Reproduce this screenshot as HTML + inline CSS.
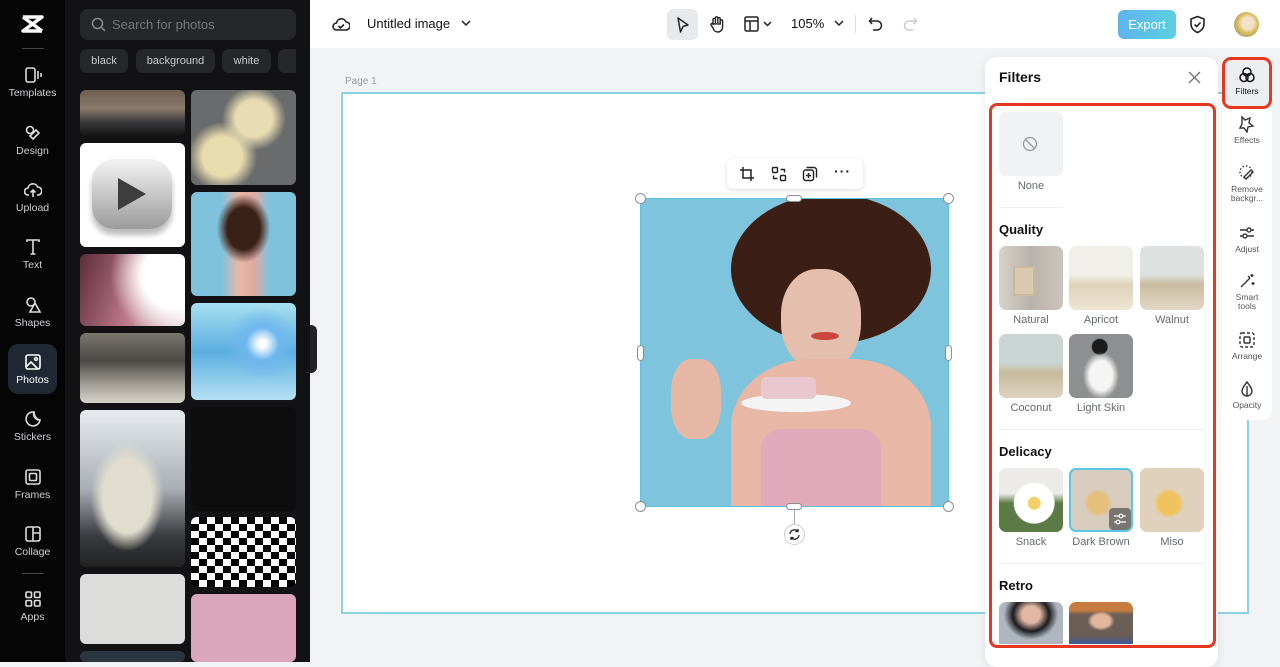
<!DOCTYPE html>
<html><head><meta charset="utf-8"><style>
*{box-sizing:border-box;margin:0;padding:0}
body{width:1280px;height:662px;overflow:hidden;font-family:"Liberation Sans",sans-serif;background:#f2f3f5;position:relative}
.abs{position:absolute}
.rail{left:0;top:0;width:65px;height:662px;background:#050505}
.ri{position:absolute;left:8px;width:49px;height:50px;color:#cfd0d4;font-size:10.5px;text-align:center}
.ri svg{display:block;margin:4px auto 3px}
.panel{left:65px;top:0;width:245px;height:662px;background:#121215}
.tile{position:absolute;border-radius:6px;overflow:hidden}
.chip{position:absolute;top:49px;height:24px;border-radius:7px;background:#26272b;color:#c9cacd;font-size:11px;line-height:24px;text-align:center}
.hdr{left:310px;top:0;width:970px;height:48px;background:#fff}
.fl{position:absolute;font-size:11px;color:#666a70;text-align:center;width:64px}
.th{position:absolute;width:64px;height:64px;border-radius:7px;overflow:hidden}
.sec{position:absolute;left:999px;font-size:13px;font-weight:bold;color:#111}
.tb{position:absolute;left:1222px;width:50px;text-align:center;font-size:8.5px;color:#555;line-height:9px}
.tb svg{display:block;margin:0 auto 3px}
.h{position:absolute;width:11px;height:11px;border-radius:50%;background:#fff;border:1px solid #8a8f96}
</style></head><body>
<div class="abs rail">
 <svg class="abs" style="left:20px;top:14px" width="25" height="20" viewBox="0 0 25 20"><path d="M3 3h19L3 17h19M3 3l19 14" stroke="#fff" stroke-width="3.5" fill="none" stroke-linejoin="round"/></svg>
 <div class="abs" style="left:22px;top:48px;width:22px;height:1px;background:#444"></div>
 <div class="ri" style="top:62px"><svg width="18" height="18" viewBox="0 0 18 18" fill="none" stroke="#ddd" stroke-width="1.6"><rect x="2" y="2" width="9" height="14" rx="2"/><path d="M14 5v8M17 7v4"/></svg>Templates</div>
 <div class="ri" style="top:120px"><svg width="18" height="18" viewBox="0 0 18 18" fill="none" stroke="#ddd" stroke-width="1.6"><circle cx="6" cy="6" r="3.5"/><path d="M9 15l6-6-3-3-6 6z"/></svg>Design</div>
 <div class="ri" style="top:177px"><svg width="18" height="18" viewBox="0 0 18 18" fill="none" stroke="#ddd" stroke-width="1.6"><path d="M5 14H4a3.5 3.5 0 010-7 5 5 0 019.6-1A3.8 3.8 0 0114 14h-1M9 16V9M6.5 11.5L9 9l2.5 2.5"/></svg>Upload</div>
 <div class="ri" style="top:234px"><svg width="18" height="18" viewBox="0 0 18 18" fill="none" stroke="#ddd" stroke-width="1.6"><path d="M3 4V2h12v2M9 2v14M6.5 16h5"/></svg>Text</div>
 <div class="ri" style="top:292px"><svg width="18" height="18" viewBox="0 0 18 18" fill="none" stroke="#ddd" stroke-width="1.6"><circle cx="7" cy="6" r="4"/><path d="M11 7l5 9H6z"/></svg>Shapes</div>
 <div class="ri" style="top:344px;height:50px;background:#1f2833;border-radius:10px;color:#fff;padding-top:5px"><svg width="18" height="18" viewBox="0 0 18 18" fill="none" stroke="#fff" stroke-width="1.6"><rect x="2" y="2" width="14" height="14" rx="2"/><circle cx="12" cy="6" r="1.4"/><path d="M2 14l5-5 7 7"/></svg>Photos</div>
 <div class="ri" style="top:406px"><svg width="18" height="18" viewBox="0 0 18 18" fill="none" stroke="#ddd" stroke-width="1.6"><path d="M16 10A7 7 0 1110 2a6 6 0 006 8zM10 2c0 4 2 7 6 8"/></svg>Stickers</div>
 <div class="ri" style="top:464px"><svg width="18" height="18" viewBox="0 0 18 18" fill="none" stroke="#ddd" stroke-width="1.6"><rect x="2" y="2" width="14" height="14" rx="2"/><rect x="5.5" y="5.5" width="7" height="7" rx="1"/></svg>Frames</div>
 <div class="ri" style="top:521px"><svg width="18" height="18" viewBox="0 0 18 18" fill="none" stroke="#ddd" stroke-width="1.6"><rect x="2" y="2" width="14" height="14" rx="2"/><path d="M9 2v14M9 8h7"/></svg>Collage</div>
 <div class="abs" style="left:22px;top:573px;width:22px;height:1px;background:#444"></div>
 <div class="ri" style="top:586px"><svg width="18" height="18" viewBox="0 0 18 18" fill="none" stroke="#ddd" stroke-width="1.6"><rect x="2" y="2" width="5.5" height="5.5" rx="1"/><rect x="10.5" y="2" width="5.5" height="5.5" rx="1"/><rect x="2" y="10.5" width="5.5" height="5.5" rx="1"/><rect x="10.5" y="10.5" width="5.5" height="5.5" rx="1"/></svg>Apps</div>
</div>
<div class="abs panel">
 <div class="abs" style="left:15px;top:9px;width:216px;height:31px;background:#26272b;border-radius:8px;color:#777;font-size:13px;line-height:31px;padding-left:32px">Search for photos
  <svg class="abs" style="left:11px;top:8px" width="15" height="15" viewBox="0 0 15 15" fill="none" stroke="#888" stroke-width="1.5"><circle cx="6.5" cy="6.5" r="5"/><path d="M10.3 10.3L14 14"/></svg></div>
 <div class="chip" style="left:15px;width:48px">black</div>
 <div class="chip" style="left:71px;width:79px">background</div>
 <div class="chip" style="left:157px;width:49px">white</div>
 <div class="chip" style="left:213px;width:18px;border-radius:7px 0 0 7px"></div>
 <div class="tile" style="left:15px;top:90px;width:105px;height:46px;background:linear-gradient(#6e5f52,#8a7a6a 40%,#3a3a3c 70%,#141414)"></div>
 <div class="tile" style="left:126px;top:90px;width:105px;height:95px;background:radial-gradient(circle at 60% 30%,#e7dcb2 20%,transparent 35%),radial-gradient(circle at 30% 70%,#e8dcae 20%,transparent 35%),#6a6b6c"></div>
 <div class="tile" style="left:15px;top:143px;width:105px;height:104px;background:#fff"><div class="abs" style="left:12px;top:16px;width:80px;height:70px;border-radius:22px;background:linear-gradient(#f4f4f4,#9b9b9b);box-shadow:0 6px 6px #bbb"></div><svg class="abs" style="left:36px;top:33px" width="32" height="36"><path d="M2 2l28 16L2 34z" fill="#3d3d3d"/></svg></div>
 <div class="tile" style="left:126px;top:192px;width:105px;height:104px;background:radial-gradient(ellipse at 50% 35%,#3a2118 22%,transparent 36%),linear-gradient(90deg,#7fc2dc 30%,#e7b9a6 45%,#e0aaa2 60%,#7fc2dc 75%),#7fc2dc"></div>
 <div class="tile" style="left:15px;top:254px;width:105px;height:72px;background:radial-gradient(circle at 90% 30%,#fff 30%,transparent 60%),linear-gradient(110deg,#5e2c3a,#b77486 50%,#e9d5da)"></div>
 <div class="tile" style="left:126px;top:303px;width:105px;height:97px;background:radial-gradient(circle at 68% 42%,#fff 4%,#6fb7ee 18%,transparent 40%),linear-gradient(#a9e0f0,#59aee0 50%,#b5e1f2)"></div>
 <div class="tile" style="left:15px;top:333px;width:105px;height:70px;background:linear-gradient(#7b776f,#4b4944 40%,#9a958d 70%,#d8d3cb)"></div>
 <div class="tile" style="left:126px;top:407px;width:105px;height:104px;background:#0d0d0d"></div>
 <div class="tile" style="left:15px;top:410px;width:105px;height:157px;background:radial-gradient(ellipse at 45% 55%,#e0ddcf 30%,transparent 45%),linear-gradient(#e8ecf0,#a8afb5 50%,#3a3c40 80%,#222)"></div>
 <div class="tile" style="left:126px;top:517px;width:105px;height:70px;background:repeating-conic-gradient(#000 0 25%,#fff 0 50%) 0 0/16px 14px"></div>
 <div class="tile" style="left:15px;top:574px;width:105px;height:70px;background:#dcdcda"></div>
 <div class="tile" style="left:126px;top:594px;width:105px;height:68px;background:#d9a7b9"></div>
 <div class="tile" style="left:15px;top:651px;width:105px;height:11px;background:#2a3540"></div>
 <div class="abs" style="left:245px;top:325px;width:7px;height:48px;background:#222;border-radius:0 6px 6px 0"></div>
</div>
<div class="abs hdr">
 <svg class="abs" style="left:22px;top:15px" width="18" height="18" viewBox="0 0 18 18" fill="none" stroke="#222" stroke-width="1.6"><path d="M5 15H4.5a3.5 3.5 0 010-7 5 5 0 019.6-1A3.8 3.8 0 0114 15z"/><path d="M6.5 11l2 2 3.5-3.5"/></svg>
 <div class="abs" style="left:57px;top:16px;font-size:13px;color:#111">Untitled image</div>
 <svg class="abs" style="left:151px;top:19px" width="10" height="8"><path d="M1 2l4 4 4-4" stroke="#222" stroke-width="1.5" fill="none"/></svg>
 <div class="abs" style="left:357px;top:9px;width:31px;height:31px;background:#e8e9ec;border-radius:6px"></div>
 <svg class="abs" style="left:365px;top:16px" width="16" height="18"><path d="M3 2l10 7-5 1.5L5.5 16z" stroke="#222" stroke-width="1.5" fill="none" stroke-linejoin="round"/></svg>
 <svg class="abs" style="left:398px;top:15px" width="18" height="18" viewBox="0 0 18 18" fill="none" stroke="#222" stroke-width="1.4"><path d="M5 10V4.5a1.2 1.2 0 012.4 0V9M7.4 8V3a1.2 1.2 0 012.4 0v5M9.8 8V3.8a1.2 1.2 0 012.4 0V9M12.2 9V6a1.2 1.2 0 012.4 0v5.5A5 5 0 019.6 17 5 5 0 015 13l-2-3a1.2 1.2 0 012-1.2z"/></svg>
 <svg class="abs" style="left:434px;top:16px" width="30" height="16" viewBox="0 0 30 16" fill="none" stroke="#222" stroke-width="1.5"><rect x="1" y="1" width="13" height="14" rx="1.5"/><path d="M1 5h13M6 5v10M20 6l3.5 3.5L27 6"/></svg>
 <div class="abs" style="left:481px;top:16px;font-size:13px;color:#111">105%</div>
 <svg class="abs" style="left:524px;top:19px" width="10" height="8"><path d="M1 2l4 4 4-4" stroke="#222" stroke-width="1.5" fill="none"/></svg>
 <div class="abs" style="left:545px;top:15px;width:1px;height:18px;background:#ddd"></div>
 <svg class="abs" style="left:558px;top:16px" width="16" height="16" viewBox="0 0 16 16" fill="none" stroke="#222" stroke-width="1.5"><path d="M4 2L1.5 5 4 8M1.5 5H9a4.5 4.5 0 010 9H5"/></svg>
 <svg class="abs" style="left:592px;top:16px" width="16" height="16" viewBox="0 0 16 16" fill="none" stroke="#ccc" stroke-width="1.5"><path d="M12 2l2.5 3L12 8M14.5 5H7a4.5 4.5 0 000 9h4"/></svg>
 <div class="abs" style="left:808px;top:10px;width:58px;height:29px;border-radius:6px;background:linear-gradient(90deg,#5fb4ee,#5ccfe0);color:#fff;font-size:13px;line-height:29px;text-align:center">Export</div>
 <svg class="abs" style="left:879px;top:15px" width="17" height="19" viewBox="0 0 17 19" fill="none" stroke="#222" stroke-width="1.6"><path d="M8.5 1.5L15 4v5c0 4-3 7-6.5 8.5C5 16 2 13 2 9V4z"/><path d="M5.5 9.5l2.2 2 3.8-4"/></svg>
 <div class="abs" style="left:924px;top:12px;width:25px;height:25px;border-radius:50%;background:radial-gradient(circle at 55% 45%,#f1e1c8 30%,#d7b550 55%,#6a98b8)"></div>
</div>
<div class="abs" style="left:345px;top:76px;font-size:10px;color:#999">Page 1</div>
<div class="abs" style="left:341px;top:92px;width:908px;height:522px;background:#fff;border:2px solid #8ad3e6"></div>
<div class="abs" style="left:640px;top:198px;width:309px;height:309px;border:1px solid #59c3e0;overflow:hidden;background:#7ec4dc">
 <div class="abs" style="left:90px;top:-5px;width:200px;height:150px;border-radius:50%;background:#3b1f15"></div>
 <div class="abs" style="left:140px;top:70px;width:80px;height:100px;border-radius:45%;background:#e5bfae"></div>
 <div class="abs" style="left:170px;top:133px;width:28px;height:8px;border-radius:50%;background:#c9453e"></div>
 <div class="abs" style="left:30px;top:160px;width:50px;height:80px;border-radius:40%;background:#e6b7a4"></div>
 <div class="abs" style="left:90px;top:160px;width:200px;height:170px;border-radius:40% 40% 0 0;background:#e8b7a6"></div>
 <div class="abs" style="left:120px;top:230px;width:120px;height:90px;border-radius:20px 20px 0 0;background:#e2a9ba"></div>
 <div class="abs" style="left:100px;top:195px;width:110px;height:18px;border-radius:50%;background:#f4f4f4"></div>
 <div class="abs" style="left:120px;top:178px;width:55px;height:22px;border-radius:5px;background:#e9c7cf"></div>
</div>
<div class="h" style="left:635px;top:193px"></div><div class="h" style="left:943px;top:193px"></div><div class="h" style="left:635px;top:501px"></div><div class="h" style="left:943px;top:501px"></div>
<div class="abs" style="left:786px;top:195px;width:16px;height:7px;border-radius:4px;background:#fff;border:1px solid #8a8f96"></div>
<div class="abs" style="left:786px;top:503px;width:16px;height:7px;border-radius:4px;background:#fff;border:1px solid #8a8f96"></div>
<div class="abs" style="left:637px;top:345px;width:7px;height:16px;border-radius:4px;background:#fff;border:1px solid #8a8f96"></div>
<div class="abs" style="left:945px;top:345px;width:7px;height:16px;border-radius:4px;background:#fff;border:1px solid #8a8f96"></div>
<div class="abs" style="left:794px;top:510px;width:1px;height:15px;background:#aaa"></div>
<div class="abs" style="left:784px;top:524px;width:21px;height:21px;border-radius:50%;background:#fff;border:1px solid #ccc"></div>
<svg class="abs" style="left:788px;top:528px" width="13" height="13" viewBox="0 0 13 13" fill="none" stroke="#222" stroke-width="1.3"><path d="M2 6a4.5 4.5 0 018-2.5M11 7a4.5 4.5 0 01-8 2.5M10 1v2.5H7.5M3 12V9.5h2.5"/></svg>
<div class="abs" style="left:727px;top:159px;width:136px;height:30px;background:#fff;border-radius:6px;box-shadow:0 1px 4px rgba(0,0,0,.15)"></div>
<svg class="abs" style="left:739px;top:166px" width="16" height="16" viewBox="0 0 16 16" fill="none" stroke="#222" stroke-width="1.5"><path d="M4 1v11h11M1 4h11v11"/></svg>
<svg class="abs" style="left:771px;top:166px" width="16" height="16" viewBox="0 0 16 16" fill="none" stroke="#222" stroke-width="1.4"><rect x="1.5" y="1.5" width="5" height="5" rx="1"/><rect x="9.5" y="9.5" width="5" height="5" rx="1"/><path d="M9.5 3.5h4v3M6.5 12.5h-4v-3"/></svg>
<svg class="abs" style="left:802px;top:166px" width="16" height="16" viewBox="0 0 16 16" fill="none" stroke="#222" stroke-width="1.4"><rect x="1.5" y="4" width="10" height="10.5" rx="2"/><path d="M4.5 1.5H12a2.5 2.5 0 012.5 2.5v7.5M6.5 7v5M4 9.5h5"/></svg>
<div class="abs" style="left:834px;top:163px;font-size:14px;font-weight:bold;color:#222;letter-spacing:1px">···</div>
<div class="abs" style="left:985px;top:57px;width:233px;height:610px;background:#fff;border-radius:12px;box-shadow:0 2px 10px rgba(0,0,0,.08)"></div>
<div class="abs" style="left:999px;top:69px;font-size:14px;font-weight:bold;color:#111">Filters</div>
<svg class="abs" style="left:1188px;top:71px" width="13" height="13"><path d="M1 1l11 11M12 1L1 12" stroke="#777" stroke-width="1.4"/></svg>
<div class="abs" style="left:989px;top:103px;width:227px;height:545px;border:3px solid #e6381f;border-radius:8px"></div>
<div class="th" style="left:999px;top:112px;background:#f1f2f4"></div>
<svg class="abs" style="left:1022px;top:136px" width="16" height="16" viewBox="0 0 16 16" fill="none" stroke="#999" stroke-width="1.3"><circle cx="8" cy="8" r="6.5"/><path d="M3.5 3.5l9 9"/></svg>
<div class="fl" style="left:999px;top:180px">None</div>
<div class="abs" style="left:999px;top:207px;width:64px;height:1px;background:#eee"></div>
<div class="sec" style="top:222px">Quality</div>
<div class="th" style="left:999px;top:246px;background:linear-gradient(90deg,#d8d2c8,#b8b3ac 50%,#ccc5bd)"><div class="abs" style="left:14px;top:20px;width:22px;height:30px;background:#d9c9ae;border:2px solid #c9b99a"></div></div>
<div class="th" style="left:1069px;top:246px;background:linear-gradient(#f1efe9 45%,#ddd2b8 60%,#efe6d4)"></div>
<div class="th" style="left:1140px;top:246px;background:linear-gradient(#dde1df 45%,#c9bc9f 60%,#e2d8c6)"></div>
<div class="fl" style="left:999px;top:314px">Natural</div><div class="fl" style="left:1069px;top:314px">Apricot</div><div class="fl" style="left:1140px;top:314px">Walnut</div>
<div class="th" style="left:999px;top:334px;background:linear-gradient(#cbd6d4 45%,#c7bb9c 60%,#ddd3c0)"></div>
<div class="th" style="left:1069px;top:334px;background:radial-gradient(ellipse at 50% 65%,#f5f5f3 25%,transparent 40%),radial-gradient(circle at 48% 20%,#1a1a1a 12%,transparent 14%),#8e8f90"></div>
<div class="fl" style="left:999px;top:402px">Coconut</div><div class="fl" style="left:1069px;top:402px">Light Skin</div>
<div class="abs" style="left:999px;top:429px;width:205px;height:1px;background:#eee"></div>
<div class="sec" style="top:444px">Delicacy</div>
<div class="th" style="left:999px;top:468px;background:radial-gradient(ellipse at 55% 55%,#f3d168 12%,#fff 14%,#fff 40%,transparent 42%),linear-gradient(#ecebe8 40%,#5c7a45 55%)"></div>
<div class="th" style="left:1069px;top:468px;border:2px solid #5bc5e3;background:radial-gradient(ellipse at 45% 55%,#e5c07c 22%,transparent 30%),#d7ccbe"><div class="abs" style="left:38px;top:38px;width:22px;height:22px;border-radius:4px;background:#7a7570"></div><svg class="abs" style="left:42px;top:42px" width="14" height="14" viewBox="0 0 14 14" fill="none" stroke="#fff" stroke-width="1.2"><path d="M1 4h12M1 10h12"/><circle cx="8" cy="4" r="1.8" fill="#7a7570"/><circle cx="5" cy="10" r="1.8" fill="#7a7570"/></svg></div>
<div class="th" style="left:1140px;top:468px;background:radial-gradient(ellipse at 45% 55%,#efc45e 22%,transparent 30%),#dfd1bb"></div>
<div class="fl" style="left:999px;top:536px">Snack</div><div class="fl" style="left:1069px;top:536px">Dark Brown</div><div class="fl" style="left:1140px;top:536px">Miso</div>
<div class="abs" style="left:999px;top:563px;width:205px;height:1px;background:#eee"></div>
<div class="sec" style="top:578px">Retro</div>
<div class="th" style="left:999px;top:602px;height:42px;border-radius:7px 7px 0 0;background:radial-gradient(ellipse at 50% 30%,#e2b8a5 20%,#1b1b1d 40%,#aeb6c0 60%)"></div>
<div class="th" style="left:1069px;top:602px;height:42px;border-radius:7px 7px 0 0;background:radial-gradient(ellipse at 50% 45%,#e3b59d 20%,transparent 30%),linear-gradient(#c77c3f 20%,#6b5e55 30%,#6b5e55 80%,#3d5c9c)"></div>
<div class="abs" style="left:1222px;top:57px;width:50px;height:363px;background:#fff;border-radius:10px"></div>
<div class="abs" style="left:1222px;top:57px;width:50px;height:52px;border:3px solid #e6381f;border-radius:9px;background:#eceef1"></div>
<div class="tb" style="top:66px;color:#111"><svg width="18" height="18" viewBox="0 0 18 18" fill="none" stroke="#111" stroke-width="1.5"><circle cx="9" cy="6" r="4"/><circle cx="6" cy="11.5" r="4"/><circle cx="12" cy="11.5" r="4"/></svg>Filters</div>
<div class="tb" style="top:115px"><svg width="18" height="18" viewBox="0 0 18 18" fill="none" stroke="#333" stroke-width="1.4"><path d="M4 2l3 3 5-2-1 5 4 3-5 1-1 5-3-4H2l2-4z"/></svg>Effects</div>
<div class="tb" style="top:164px"><svg width="18" height="18" viewBox="0 0 18 18" fill="none" stroke="#333" stroke-width="1.4"><circle cx="8" cy="8" r="6" stroke-dasharray="1.5 2"/><path d="M6 13l7-7 2 2-7 7z"/></svg>Remove<br>backgr...</div>
<div class="tb" style="top:224px"><svg width="18" height="18" viewBox="0 0 18 18" fill="none" stroke="#333" stroke-width="1.4"><path d="M2 6h14M2 12h14"/><circle cx="11" cy="6" r="2" fill="#fff"/><circle cx="7" cy="12" r="2" fill="#fff"/></svg>Adjust</div>
<div class="tb" style="top:272px"><svg width="18" height="18" viewBox="0 0 18 18" fill="none" stroke="#333" stroke-width="1.4"><path d="M3 15L12 6M10 4l2 2M14 2v3M12.5 3.5h3M15 10v3M13.5 11.5h3"/></svg>Smart<br>tools</div>
<div class="tb" style="top:331px"><svg width="18" height="18" viewBox="0 0 18 18" fill="none" stroke="#333" stroke-width="1.4"><rect x="2" y="2" width="14" height="14" rx="2" stroke-dasharray="3 2"/><rect x="6" y="6" width="6" height="6" rx="1"/></svg>Arrange</div>
<div class="tb" style="top:380px"><svg width="18" height="18" viewBox="0 0 18 18" fill="none" stroke="#333" stroke-width="1.4"><path d="M9 2c3 4 5 6.5 5 9a5 5 0 01-10 0c0-2.5 2-5 5-9zM9 6v10"/></svg>Opacity</div>
</body></html>
